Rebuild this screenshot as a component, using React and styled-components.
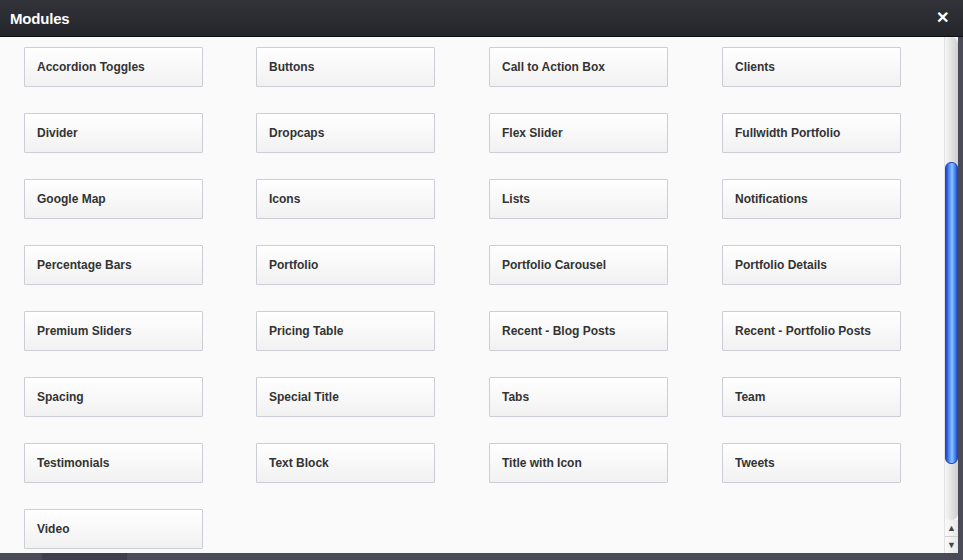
import React from "react";
import styled, { createGlobalStyle } from "styled-components";

const Global = createGlobalStyle`
  html, body { margin: 0; padding: 0; }
  body { background: #4a4b56; font-family: "Liberation Sans", Arial, sans-serif; }
`;

const Page = styled.div`
  width: 963px;
  height: 560px;
  overflow: hidden;
  display: flex;
  flex-direction: column;
  background: #4a4b56;
`;

const Modal = styled.div`
  width: 958px;
  height: 553px;
  display: flex;
  flex-direction: column;
  background: #fafafa;
  flex-shrink: 0;
`;

const Header = styled.div`
  height: 37px;
  flex-shrink: 0;
  display: flex;
  align-items: center;
  justify-content: space-between;
  padding: 0 14px 0 10px;
  background: linear-gradient(#32343a, #23252a);
  border-bottom: 1px solid #0e0f11;
  width: 963px;
  box-sizing: border-box;
`;

const Title = styled.h1`
  margin: 0;
  font-size: 15px;
  font-weight: 700;
  color: #fff;
  letter-spacing: -0.2px;
`;

const Close = styled.span`
  color: #fff;
  font-size: 16px;
  font-weight: 700;
  line-height: 1;
`;

const Body = styled.div`
  flex: 1;
  display: flex;
  min-height: 0;
`;

const Grid = styled.div`
  flex: 1;
  display: grid;
  grid-template-columns: 232px 233px 233px 179px;
  row-gap: 26px;
  align-content: start;
  padding: 10px 0 0 24px;
`;

const ModuleButton = styled.div`
  width: 179px;
  height: 40px;
  box-sizing: border-box;
  border: 1px solid #cdcdd5;
  border-radius: 1px;
  background: linear-gradient(#ffffff, #f1f1f1);
  display: flex;
  align-items: center;
  padding-left: 12px;
  font-size: 12px;
  font-weight: 700;
  color: #333;
`;

const Scrollbar = styled.div`
  width: 14px;
  display: flex;
  flex-direction: column;
  background: #f3f3f3;
  border-left: 1px solid #e2e2e2;
  box-sizing: border-box;
`;

const Track = styled.div`
  flex: 1;
  display: flex;
  flex-direction: column;
  padding-top: 125px;
  padding-bottom: 56px;
  background: linear-gradient(90deg, #f6f6f6, #e2e2e2 50%, #cfcfcf);
  border-radius: 7px;
`;

const Thumb = styled.div`
  flex: 1;
  border-radius: 6px;
  background: linear-gradient(90deg, #1d46c8, #5d9af5 35%, #8cc0ff 55%, #4a86ef 80%, #1f4fd0);
  border: 1px solid #2546b8;
  box-sizing: border-box;
`;

const Arrow = styled.div`
  height: 16px;
  display: flex;
  align-items: center;
  justify-content: center;
  font-size: 9px;
  color: #444;
  background: linear-gradient(90deg, #fafafa, #e6e6e6);
  border-top: ${(p) => (p.$divider ? "1px solid #cfcfcf" : "none")};
`;

const BottomStrip = styled.div`
  height: 7px;
  overflow: hidden;
  padding-left: 42px;
`;

const SectionButton = styled.div`
  width: 85px;
  height: 7px;
  background: #3f404b;
`;

const modules = [
  "Accordion Toggles", "Buttons", "Call to Action Box", "Clients",
  "Divider", "Dropcaps", "Flex Slider", "Fullwidth Portfolio",
  "Google Map", "Icons", "Lists", "Notifications",
  "Percentage Bars", "Portfolio", "Portfolio Carousel", "Portfolio Details",
  "Premium Sliders", "Pricing Table", "Recent - Blog Posts", "Recent - Portfolio Posts",
  "Spacing", "Special Title", "Tabs", "Team",
  "Testimonials", "Text Block", "Title with Icon", "Tweets",
  "Video",
];

export default function App() {
  return (
    <>
      <Global />
      <Page>
        <Modal>
          <Header>
            <Title>Modules</Title>
            <Close>✕</Close>
          </Header>
          <Body>
            <Grid>
              {modules.map((m) => (
                <ModuleButton key={m}>{m}</ModuleButton>
              ))}
            </Grid>
            <Scrollbar>
              <Track>
                <Thumb />
              </Track>
              <Arrow>▲</Arrow>
              <Arrow $divider>▼</Arrow>
            </Scrollbar>
          </Body>
        </Modal>
        <BottomStrip>
          <SectionButton />
        </BottomStrip>
      </Page>
    </>
  );
}
